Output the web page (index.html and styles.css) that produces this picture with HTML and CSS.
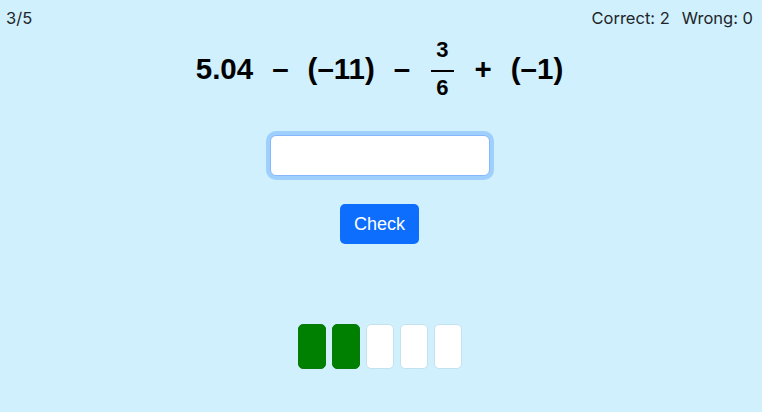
FILE: index.html
```html
<!DOCTYPE html>
<html lang="en">
<head>
<meta charset="utf-8">
<title>Quiz</title>
<link rel="stylesheet" href="styles.css">
</head>
<body>
<header class="topbar">
  <span class="progress">3/5</span>
  <span class="score"><span class="correct">Correct: 2</span><span class="wrong">Wrong: 0</span></span>
</header>
<main class="quiz">
  <div class="expr">
    <span class="term">5.04</span>
    <span class="op">–</span>
    <span class="term">(–11)</span>
    <span class="op">–</span>
    <span class="frac"><span class="num">3</span><span class="den">6</span></span>
    <span class="op">+</span>
    <span class="term">(–1)</span>
  </div>
  <input class="answer" type="text" autofocus>
  <button class="check" type="button">Check</button>
  <div class="tracker">
    <span class="cell done"></span>
    <span class="cell done"></span>
    <span class="cell"></span>
    <span class="cell"></span>
    <span class="cell"></span>
  </div>
</main>
</body>
</html>
```
FILE: styles.css
```css
html, body {
  margin: 0;
  padding: 0;
}
body {
  background: #d0f0fe;
  font-family: "Liberation Sans", Arial, sans-serif;
  color: #212529;
  width: 762px;
  height: 412px;
  overflow: hidden;
}
.topbar {
  display: flex;
  justify-content: space-between;
  padding: 9px 9px 0 6px;
  font-family: Inter, "Liberation Sans", sans-serif;
  font-size: 16.5px;
  line-height: 19px;
}
.score {
  display: flex;
  gap: 12px;
}
.quiz {
  display: flex;
  flex-direction: column;
  align-items: center;
  padding-right: 3px;
}
.expr {
  margin-top: 10px;
  display: flex;
  align-items: center;
  gap: 19px;
  font-weight: bold;
  font-size: 29.5px;
  line-height: 32px;
  color: #000;
}
.frac {
  display: flex;
  flex-direction: column;
  align-items: stretch;
  font-size: 22px;
  line-height: 24px;
  padding: 0 2px;
}
.num {
  text-align: center;
  padding: 0 5px 8px;
  border-bottom: 2.5px solid #000;
}
.den {
  text-align: center;
  padding: 4px 5px 0;
}
.answer {
  margin-top: 35px;
  box-sizing: border-box;
  width: 220px;
  height: 41px;
  border: 1px solid #86b7fe;
  border-radius: 6px;
  background: #fff;
  box-shadow: 0 0 0 4px rgba(13, 110, 253, 0.25);
  outline: none;
  font-family: inherit;
  font-size: 18px;
  padding: 6px 12px;
}
.check {
  margin-top: 28px;
  box-sizing: border-box;
  height: 40px;
  padding: 0 14px;
  border: none;
  border-radius: 5px;
  background: #0d6efd;
  color: #fff;
  font-family: inherit;
  font-size: 18px;
  line-height: 40px;
}
.tracker {
  margin-top: 80px;
  display: flex;
  gap: 6px;
}
.cell {
  box-sizing: border-box;
  width: 28px;
  height: 45px;
  border-radius: 5px;
  background: #fff;
  border: 1px solid #c4e2ee;
}
.cell.done {
  background: #008000;
  border-color: #0a7a0a;
}
```
